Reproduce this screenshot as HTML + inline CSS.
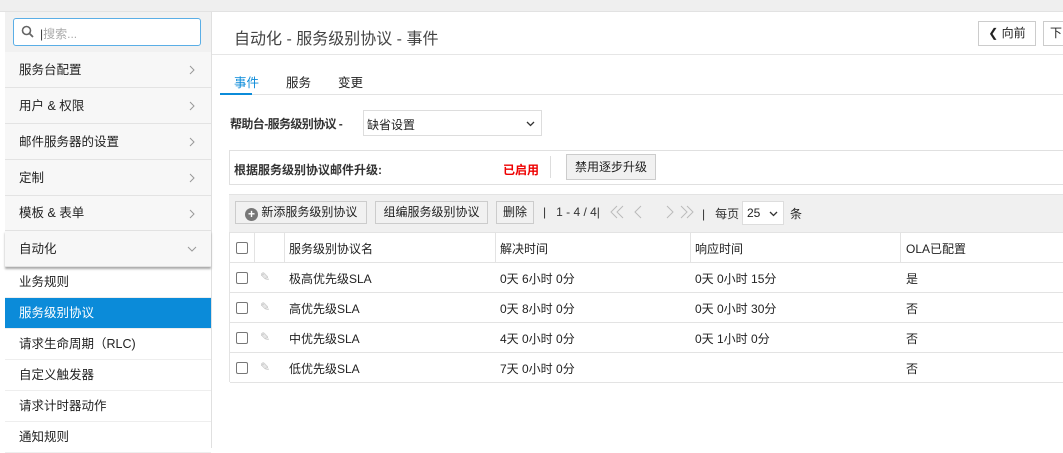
<!DOCTYPE html>
<html><head><meta charset="utf-8"><style>
*{box-sizing:border-box;margin:0;padding:0}
body{width:1063px;height:448px;overflow:hidden;background:#fff;font-family:"Liberation Sans","Noto Sans CJK SC",sans-serif;font-size:12px;color:#222;position:relative}
.abs{position:absolute}
.top{left:0;top:0;width:1063px;height:12px;background:#efefef;border-bottom:1px solid #e2e2e2}
.side{left:5px;top:12px;width:207px;height:436px;background:#fff;border-right:1px solid #e0e0e0}
.search{left:0;top:0;width:206px;height:40px;background:#f1f1f1}
.search div{position:absolute;left:8px;top:6px;width:188px;height:28px;border:1px solid #5aaee6;border-radius:3px;background:#fff;color:#aaa;padding:6px 0 0 26px}
.item{position:absolute;left:0;width:206px;background:#f7f7f7;border-bottom:1px solid #e3e3e3;padding-left:14px;font-size:12.5px;color:#222}
.sub{position:absolute;left:0;width:206px;border-bottom:1px solid #eee;padding-left:14px;font-size:12.5px}
.chev{position:absolute;right:16px;top:13px}
.btn{position:absolute;border:1px solid #ccc;background:#f1f1f1;font-size:12px;text-align:center}
.row{position:absolute;left:230px;width:833px;border-bottom:1px solid #e3e3e3;height:30px}
.cb{position:absolute;left:6px;width:12px;height:12px;border:1px solid #777;border-radius:2px;background:#fff}
.c{position:absolute;top:7px}
</style></head><body>
<div class="abs top"></div>
<div class="abs side">
 <div class="abs search"><div><svg class="abs" style="left:7px;top:6px" width="13" height="13" viewBox="0 0 13 13"><circle cx="5.5" cy="5.5" r="4" fill="none" stroke="#666" stroke-width="1.6"/><line x1="8.5" y1="8.5" x2="12" y2="12" stroke="#666" stroke-width="1.8"/></svg><span style="color:#333">|</span>搜索...</div></div>
 <div class="item" style="top:40px;height:36px;line-height:36px">服务台配置<svg class="chev" width="6" height="10"><path d="M1 1l4 4-4 4" fill="none" stroke="#999"/></svg></div>
 <div class="item" style="top:76px;height:36px;line-height:36px">用户 &amp; 权限<svg class="chev" width="6" height="10"><path d="M1 1l4 4-4 4" fill="none" stroke="#999"/></svg></div>
 <div class="item" style="top:112px;height:36px;line-height:36px">邮件服务器的设置<svg class="chev" width="6" height="10"><path d="M1 1l4 4-4 4" fill="none" stroke="#999"/></svg></div>
 <div class="item" style="top:148px;height:36px;line-height:36px">定制<svg class="chev" width="6" height="10"><path d="M1 1l4 4-4 4" fill="none" stroke="#999"/></svg></div>
 <div class="item" style="top:184px;height:35px;line-height:35px">模板 &amp; 表单<svg class="chev" width="6" height="10"><path d="M1 1l4 4-4 4" fill="none" stroke="#999"/></svg></div>
 <div class="item" style="top:219px;height:36px;line-height:36px;box-shadow:0 2px 2px #aaa">自动化<svg class="chev" style="right:14px;top:15px" width="10" height="6"><path d="M1 1l4 4 4-4" fill="none" stroke="#999"/></svg></div>
 <div class="sub" style="top:255px;height:31px;line-height:31px">业务规则</div>
 <div class="sub" style="top:286px;height:31px;line-height:31px;background:#0b8bd9;color:#fff">服务级别协议</div>
 <div class="sub" style="top:317px;height:31px;line-height:31px">请求生命周期（RLC)</div>
 <div class="sub" style="top:348px;height:31px;line-height:31px">自定义触发器</div>
 <div class="sub" style="top:379px;height:31px;line-height:31px">请求计时器动作</div>
 <div class="sub" style="top:410px;height:31px;line-height:31px">通知规则</div>
</div>
<div class="abs" style="left:212px;top:54px;width:851px;height:1px;background:#e6e6e6"></div>
<div class="abs" style="left:234px;top:25px;font-size:16px;color:#444">自动化 - 服务级别协议 - 事件</div>
<div class="btn" style="left:978px;top:21px;width:58px;height:25px;line-height:23px;background:#fff">&#10094; 向前</div>
<div class="btn" style="left:1043px;top:21px;width:30px;height:25px;line-height:23px;background:#fff;text-align:left;padding-left:6px">下</div>
<div class="abs" style="left:234px;top:72px;color:#0b8bd9;font-size:12.5px">事件</div>
<div class="abs" style="left:286px;top:72px;font-size:12.5px">服务</div>
<div class="abs" style="left:338px;top:72px;font-size:12.5px">变更</div>
<div class="abs" style="left:220px;top:94px;width:843px;height:1px;background:#e3e3e3"></div>
<div class="abs" style="left:220px;top:93px;width:32px;height:2px;background:#0b8bd9"></div>
<div class="abs" style="left:230px;top:115px;font-weight:bold;font-size:12px;color:#333;letter-spacing:-0.6px">帮助台-服务级别协议 -</div>
<div class="abs" style="left:363px;top:110px;width:179px;height:26px;border:1px solid #ddd;padding:5px 0 0 3px">缺省设置<svg class="abs" style="right:6px;top:10px" width="9" height="6"><path d="M1 1l3.5 3.5L8 1" fill="none" stroke="#333" stroke-width="1.3"/></svg></div>
<div class="abs" style="left:229px;top:150px;width:834px;height:35px;border:1px solid #e0e0e0;border-right:none"></div>
<div class="abs" style="left:234px;top:161px;font-weight:bold;color:#333">根据服务级别协议邮件升级:</div>
<div class="abs" style="left:503px;top:161px;font-weight:bold;color:#e00">已启用</div>
<div class="abs" style="left:550px;top:156px;width:1px;height:22px;background:#ddd"></div>
<div class="btn" style="left:566px;top:154px;width:90px;height:26px;line-height:24px">禁用逐步升级</div>
<div class="abs" style="left:229px;top:194px;width:834px;height:38px;background:#f0f0f0;border-top:1px solid #e3e3e3"></div>
<div class="btn" style="left:235px;top:201px;width:132px;height:23px;line-height:21px;text-align:left;padding-left:9px"><span style="display:inline-block;width:13px;height:13px;border-radius:50%;background:#777;color:#fff;font-size:12px;line-height:13px;text-align:center;vertical-align:-2px;font-weight:bold">+</span> 新添服务级别协议</div>
<div class="btn" style="left:375px;top:201px;width:113px;height:23px;line-height:21px">组编服务级别协议</div>
<div class="btn" style="left:496px;top:201px;width:38px;height:23px;line-height:21px">删除</div>
<div class="abs" style="left:543px;top:205px;color:#333">|&nbsp;&nbsp;&nbsp;1 - 4 / 4|</div>
<svg class="abs" style="left:610px;top:205px" width="90" height="14"><g fill="none" stroke="#bbb"><path d="M7 1l-6 6 6 6M13 1l-6 6 6 6M31 1l-6 6 6 6M57 1l6 6-6 6M71 1l6 6-6 6M77 1l6 6-6 6"/></g></svg>
<div class="abs" style="left:702px;top:205px;color:#333">|&nbsp;&nbsp;&nbsp;每页</div>
<div class="abs" style="left:742px;top:201px;width:42px;height:24px;background:#fff;border:1px solid #ddd;padding:4px 0 0 4px">25<svg class="abs" style="right:5px;top:9px" width="9" height="6"><path d="M1 1l3.5 3.5L8 1" fill="none" stroke="#333" stroke-width="1.3"/></svg></div>
<div class="abs" style="left:790px;top:205px">条</div>
<div class="row" style="top:232px;border-top:1px solid #e3e3e3;height:31px">
 <div class="cb" style="top:9px"></div>
 <div class="abs" style="left:24px;top:0;width:1px;height:30px;background:#e3e3e3"></div>
 <div class="abs" style="left:54px;top:0;width:1px;height:30px;background:#e3e3e3"></div>
 <div class="abs" style="left:265px;top:0;width:1px;height:30px;background:#e3e3e3"></div>
 <div class="abs" style="left:460px;top:0;width:1px;height:30px;background:#e3e3e3"></div>
 <div class="abs" style="left:670px;top:0;width:1px;height:30px;background:#e3e3e3"></div>
 <div class="c" style="left:59px">服务级别协议名</div><div class="c" style="left:270px">解决时间</div><div class="c" style="left:465px">响应时间</div><div class="c" style="left:676px">OLA已配置</div>
</div>
<div class="row" style="top:263px"><div class="cb" style="top:9px"></div><div class="c" style="left:30px;color:#bbb">✎</div><div class="c" style="left:59px">极高优先级SLA</div><div class="c" style="left:270px">0天 6小时 0分</div><div class="c" style="left:465px">0天 0小时 15分</div><div class="c" style="left:676px">是</div></div>
<div class="row" style="top:293px"><div class="cb" style="top:9px"></div><div class="c" style="left:30px;color:#bbb">✎</div><div class="c" style="left:59px">高优先级SLA</div><div class="c" style="left:270px">0天 8小时 0分</div><div class="c" style="left:465px">0天 0小时 30分</div><div class="c" style="left:676px">否</div></div>
<div class="row" style="top:323px"><div class="cb" style="top:9px"></div><div class="c" style="left:30px;color:#bbb">✎</div><div class="c" style="left:59px">中优先级SLA</div><div class="c" style="left:270px">4天 0小时 0分</div><div class="c" style="left:465px">0天 1小时 0分</div><div class="c" style="left:676px">否</div></div>
<div class="row" style="top:353px"><div class="cb" style="top:9px"></div><div class="c" style="left:30px;color:#bbb">✎</div><div class="c" style="left:59px">低优先级SLA</div><div class="c" style="left:270px">7天 0小时 0分</div><div class="c" style="left:676px">否</div></div>
<div class="abs" style="left:229px;top:232px;width:1px;height:150px;background:#e3e3e3"></div>
</body></html>
